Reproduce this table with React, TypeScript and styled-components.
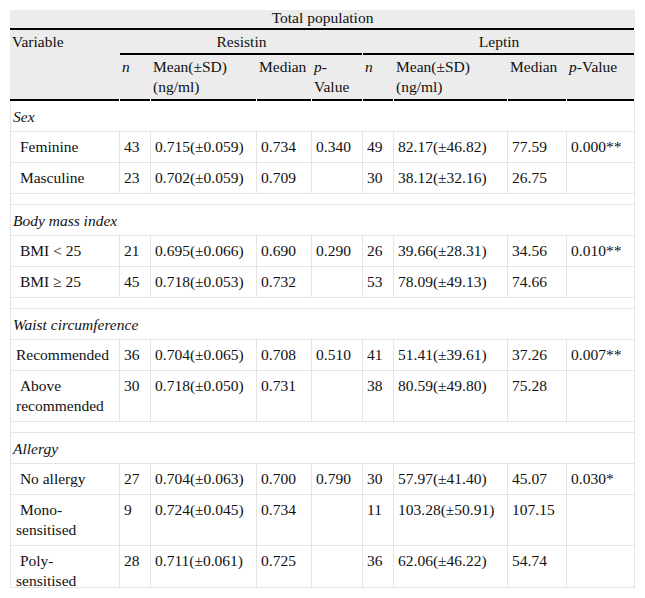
import React from 'react';
import styled, { createGlobalStyle } from 'styled-components';

const GlobalStyle = createGlobalStyle`
  html, body {
    margin: 0;
    padding: 0;
    background: #fff;
  }
`;

const Frame = styled.div`
  margin: 10px;
  width: 625px;
  height: 577px;
  overflow: hidden;
  border-bottom: 1px solid #e4e4e4;
  font-family: 'Liberation Serif', 'Times New Roman', serif;
  font-size: 15.5px;
  color: #111;
`;

const Table = styled.table`
  width: 625px;
  table-layout: fixed;
  border-collapse: separate;
  border-spacing: 0;
`;

const HeadCell = styled.th<{ align?: 'left' | 'center'; tier: 1 | 2 | 3 }>`
  font-weight: normal;
  text-align: ${p => p.align || 'left'};
  vertical-align: top;
  line-height: ${p => (p.tier === 1 ? '16px' : '20px')};
  padding: ${p => (p.tier === 1 ? '0 2px 4px' : p.tier === 2 ? '2px 2px 3px' : '2px 2px 4px')};
  background:
    linear-gradient(#000, #000) left bottom / calc(100% - 1px) 2px no-repeat,
    linear-gradient(#fff, #fff) right bottom / 1px 2px no-repeat,
    #ececec;
`;

const Cell = styled.td`
  vertical-align: top;
  line-height: 20px;
  padding: 5px 5px 5px 4px;
  border-right: 1px solid #e4e4e4;
  border-bottom: 1px solid #e4e4e4;

  &:first-child {
    border-left: 1px solid #e4e4e4;
    padding: 5px 8px 5px 5px;
  }
`;

const GroupCell = styled.td`
  font-style: italic;
  line-height: 20px;
  padding: 6px 2px 4px;
  border: 1px solid #e4e4e4;
  border-top: none;
`;

const SpacerCell = styled.td`
  height: 10px;
  padding: 0;
  border: 1px solid #e4e4e4;
  border-top: none;
`;

const Em = styled.i``;

type Row = {
  label: string;
  r: [string, string, string, string];
  l: [string, string, string, string];
};

type Group = { title: string; rows: Row[] };

const NB = '\u00a0';

const groups: Group[] = [
  {
    title: 'Sex',
    rows: [
      { label: NB + 'Feminine', r: ['43', '0.715(±0.059)', '0.734', '0.340'], l: ['49', '82.17(±46.82)', '77.59', '0.000**'] },
      { label: NB + 'Masculine', r: ['23', '0.702(±0.059)', '0.709', ''], l: ['30', '38.12(±32.16)', '26.75', ''] },
    ],
  },
  {
    title: 'Body mass index',
    rows: [
      { label: NB + 'BMI < 25', r: ['21', '0.695(±0.066)', '0.690', '0.290'], l: ['26', '39.66(±28.31)', '34.56', '0.010**'] },
      { label: NB + 'BMI ≥ 25', r: ['45', '0.718(±0.053)', '0.732', ''], l: ['53', '78.09(±49.13)', '74.66', ''] },
    ],
  },
  {
    title: 'Waist circumference',
    rows: [
      { label: 'Recommended', r: ['36', '0.704(±0.065)', '0.708', '0.510'], l: ['41', '51.41(±39.61)', '37.26', '0.007**'] },
      { label: NB + 'Above recommended', r: ['30', '0.718(±0.050)', '0.731', ''], l: ['38', '80.59(±49.80)', '75.28', ''] },
    ],
  },
  {
    title: 'Allergy',
    rows: [
      { label: NB + 'No allergy', r: ['27', '0.704(±0.063)', '0.700', '0.790'], l: ['30', '57.97(±41.40)', '45.07', '0.030*'] },
      { label: NB + 'Mono-sensitised', r: ['9', '0.724(±0.045)', '0.734', ''], l: ['11', '103.28(±50.91)', '107.15', ''] },
      { label: NB + 'Poly-sensitised', r: ['28', '0.711(±0.061)', '0.725', ''], l: ['36', '62.06(±46.22)', '54.74', ''] },
    ],
  },
];

const widths = [110, 31, 106, 55, 51, 31, 114, 59, 68];

export default function App() {
  return (
    <>
      <GlobalStyle />
      <Frame>
        <Table>
          <colgroup>
            {widths.map((w, i) => (
              <col key={i} style={{ width: w }} />
            ))}
          </colgroup>
          <thead>
            <tr>
              <HeadCell tier={1} align="center" colSpan={9}>Total population</HeadCell>
            </tr>
            <tr>
              <HeadCell tier={3} rowSpan={2}>Variable</HeadCell>
              <HeadCell tier={2} align="center" colSpan={4}>Resistin</HeadCell>
              <HeadCell tier={2} align="center" colSpan={4}>Leptin</HeadCell>
            </tr>
            <tr>
              <HeadCell tier={3}><Em>n</Em></HeadCell>
              <HeadCell tier={3}>Mean(±SD) (ng/ml)</HeadCell>
              <HeadCell tier={3}>Median</HeadCell>
              <HeadCell tier={3}><Em>p</Em>-Value</HeadCell>
              <HeadCell tier={3}><Em>n</Em></HeadCell>
              <HeadCell tier={3}>Mean(±SD) (ng/ml)</HeadCell>
              <HeadCell tier={3}>Median</HeadCell>
              <HeadCell tier={3}><Em>p</Em>-Value</HeadCell>
            </tr>
          </thead>
          <tbody>
            {groups.map((g, gi) => (
              <React.Fragment key={g.title}>
                {gi > 0 && (
                  <tr>
                    <SpacerCell colSpan={9} />
                  </tr>
                )}
                <tr>
                  <GroupCell colSpan={9}>{g.title}</GroupCell>
                </tr>
                {g.rows.map(row => (
                  <tr key={row.label}>
                    <Cell>{row.label}</Cell>
                    {[...row.r, ...row.l].map((v, i) => (
                      <Cell key={i}>{v}</Cell>
                    ))}
                  </tr>
                ))}
              </React.Fragment>
            ))}
          </tbody>
        </Table>
      </Frame>
    </>
  );
}
